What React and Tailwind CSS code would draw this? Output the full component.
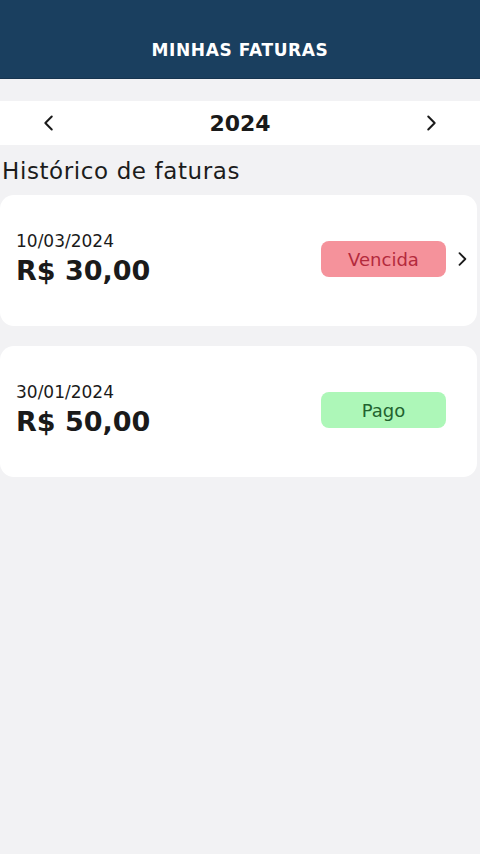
import React from "react";

function Chevron({ dir = "right", className = "" }) {
  return (
    <svg viewBox="0 0 24 24" className={className} fill="none" stroke="currentColor" strokeWidth="2.2" strokeLinecap="round" strokeLinejoin="round">
      {dir === "right" ? <path d="M9 5l7 7-7 7" /> : <path d="M15 5l-7 7 7 7" />}
    </svg>
  );
}

function Card({ date, amount, status, paid, arrow }) {
  return (
    <div className="bg-white rounded-[14px] h-[131px] mr-[3px] flex items-center pl-4">
      <div className="flex-1 flex flex-col pb-[4px]">
        <span className="text-[17px] leading-[20px] text-[#1a1a1a]">{date}</span>
        <span className="mt-[4px] text-[27px] leading-[32px] font-bold text-[#1a1a1a]">{amount}</span>
      </div>
      <div
        className={
          "mb-[3px] w-[125px] h-[36px] rounded-[8px] flex items-center justify-center text-[18px] " +
          (paid ? "bg-[#adf7b8] text-[#22632f]" : "bg-[#f5929b] text-[#b42a3d]")
        }
      >
        {status}
      </div>
      <div className="w-[31px] flex justify-center mb-[3px]">
        {arrow && <Chevron className="w-[20px] h-[20px] text-[#1a1a1a]" />}
      </div>
    </div>
  );
}

export default function App() {
  return (
    <div className="w-[480px] h-[854px] bg-[#f2f2f4] flex flex-col" style={{ fontFamily: '"DejaVu Sans", "Liberation Sans", sans-serif' }}>
      <div className="h-[79px] bg-[#1a3f5f] border-b border-[#16344f] flex items-end justify-center pb-[15px]">
        <span className="text-white font-bold text-[17px] tracking-[0.6px]">MINHAS FATURAS</span>
      </div>
      <div className="mt-[22px] h-[44px] bg-white flex items-center justify-between px-[38px]">
        <Chevron dir="left" className="w-[22px] h-[22px] text-[#1a1a1a]" />
        <span className="text-[22px] font-bold text-[#1a1a1a]">2024</span>
        <Chevron className="w-[22px] h-[22px] text-[#1a1a1a]" />
      </div>
      <div className="px-[2px] mt-[10px] h-[32px] flex items-center text-[23px] tracking-[0.6px] text-[#1c1c1c]">Histórico de faturas</div>
      <div className="mt-[8px] flex flex-col gap-[20px]">
        <Card date="10/03/2024" amount="R$ 30,00" status="Vencida" arrow />
        <Card date="30/01/2024" amount="R$ 50,00" status="Pago" paid />
      </div>
    </div>
  );
}
